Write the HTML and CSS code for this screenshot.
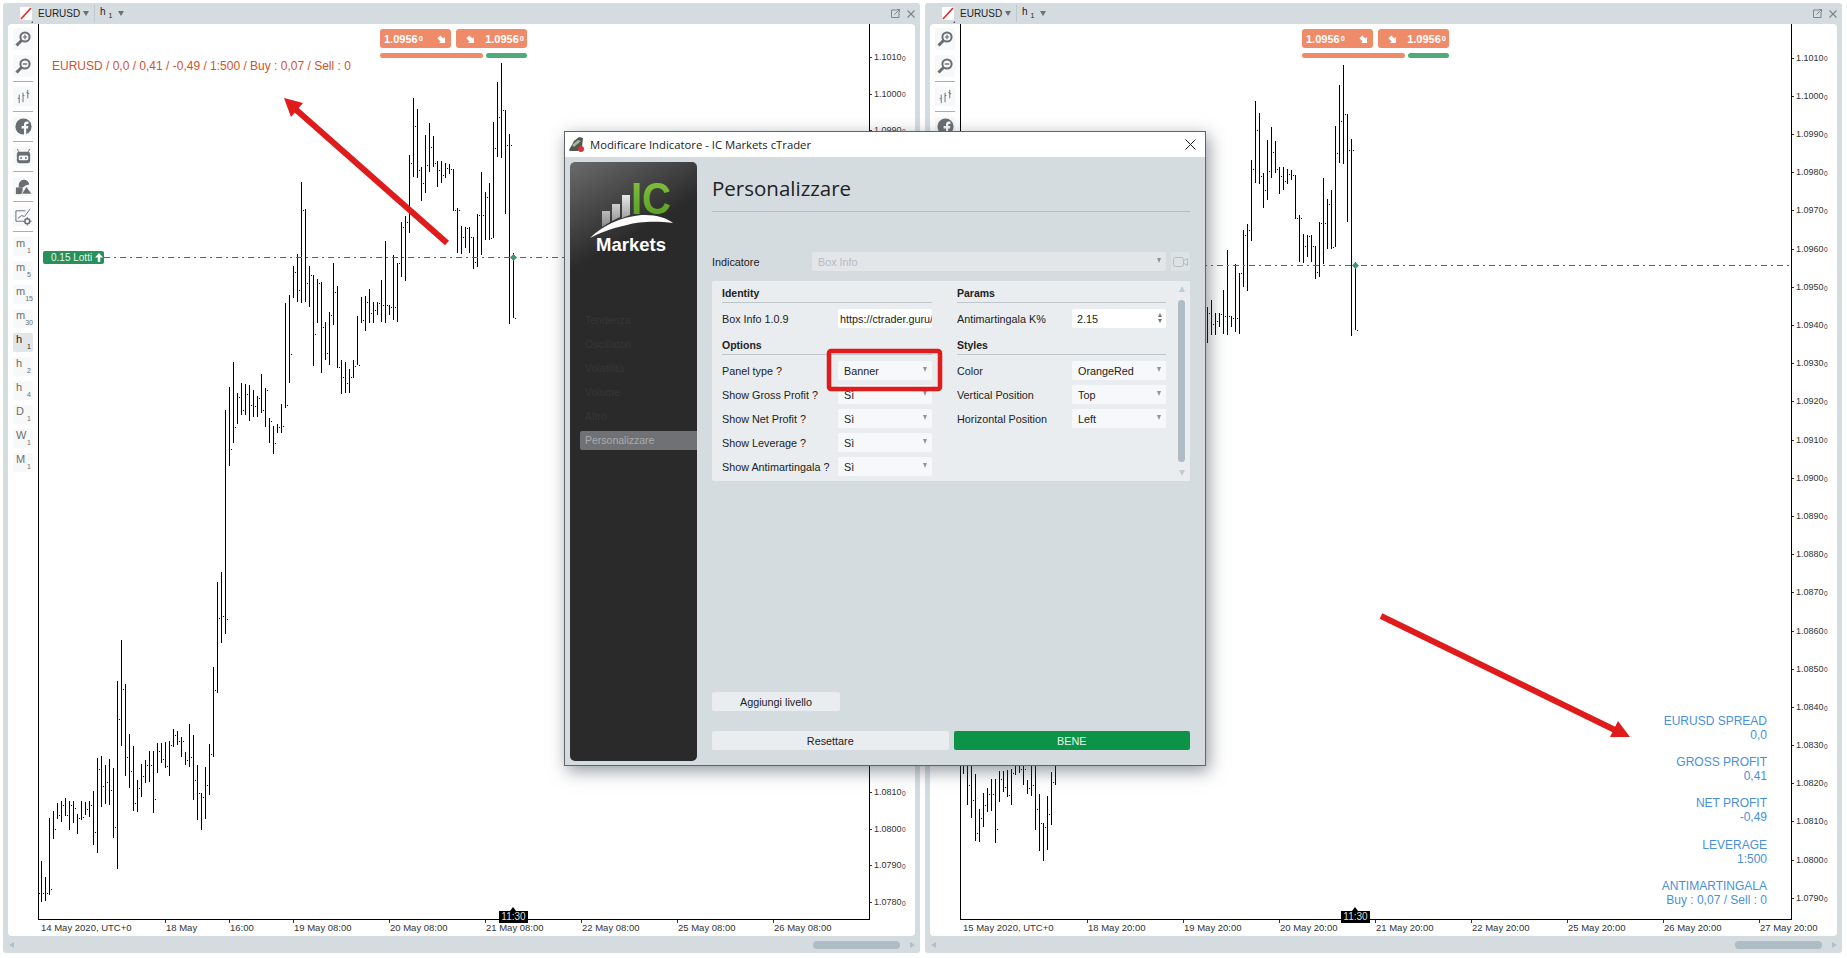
FILE: index.html
```html
<!DOCTYPE html>
<html lang="en">
    <head>
        <meta charset="UTF-8">
        <title>cTrader - Box Info</title>
        <link rel="stylesheet" href="styles.css">
        <script src="chart.js" defer></script>
    </head>
    <body>
        <!-- shared icons for both chart panels -->
        <svg class="sprite" width="0" height="0">
            <symbol id="i-zoom-in" viewBox="0 0 20 20"><circle cx="12" cy="8" r="4.600" fill="none" stroke="#6b6e71" stroke-width="2"/><path d="M8.500 11.500 3.500 16.500" stroke="#6b6e71" stroke-width="3"/><path d="M12 5.800v4.400M9.800 8h4.400" stroke="#6b6e71" stroke-width="1.200"/></symbol>
            <symbol id="i-zoom-out" viewBox="0 0 20 20"><circle cx="12" cy="8" r="4.600" fill="none" stroke="#6b6e71" stroke-width="2"/><path d="M8.500 11.500 3.500 16.500" stroke="#6b6e71" stroke-width="3"/><path d="M9.800 8h4.400" stroke="#6b6e71" stroke-width="1.400"/></symbol>
            <symbol id="i-bars" viewBox="0 0 20 20"><path d="M5.500 8v9M4 12h1.500M9.500 6v10M9.500 9h1.500M14.500 3v9M13 6h1.500M14.500 7h1.500" stroke="#6b6e71" fill="none"/></symbol>
            <symbol id="i-face" viewBox="0 0 20 20"><circle cx="10" cy="10" r="8.500" fill="#6b6e71"/><path d="M10.500 19v-7H8V9.500h2.500V8c0-2.300 1.200-3.200 3-3.200h1.700v2.500H14c-.8 0-1.100.4-1.100 1.100v1.100h2.200l-.4 2.500h-1.800v7z" fill="#f7f8f9"/></symbol>
            <symbol id="i-robot" viewBox="0 0 20 20"><path d="M5 5 3.500 2M15 5l1.500-3" stroke="#6b6e71"/><rect x="3" y="5" width="14" height="12" rx="2.500" fill="#6b6e71"/><rect x="5" y="9" width="10" height="5" rx="1.500" fill="#f7f8f9"/><circle cx="7.500" cy="11.500" r="1" fill="#6b6e71"/><circle cx="12.500" cy="11.500" r="1" fill="#6b6e71"/></symbol>
            <symbol id="i-shapes" viewBox="0 0 20 20"><path d="M5 9a5.500 5.500 0 0 1 11-1l-4 1-2.500 2H5z" fill="#6b6e71"/><path d="M2 11h7v7H2z" fill="#6b6e71"/><path d="M13 10l6 8H8z" fill="#6b6e71" stroke="#f7f8f9" stroke-width=".8"/></symbol>
            <symbol id="i-draw" viewBox="0 0 20 20"><path d="M12 4H2v11h8" fill="none" stroke="#6b6e71"/><path d="M4 12l4-3 3 1 6-8" fill="none" stroke="#6b6e71"/><circle cx="14" cy="15" r="2.600" fill="none" stroke="#6b6e71" stroke-width="1.600"/><path d="M14 10.500v2M14 17.500v2M9.500 15h2M16.500 15h2" stroke="#6b6e71"/></symbol>
            <symbol id="i-down" viewBox="0 0 10 10"><path d="M10 10V2.500L8 4.500 4 .5 .5 4l4 4-2 2z" fill="#fff"/></symbol>
        </svg>

        <main class="workspace">
            <section class="panel">
                <header class="panel-head">
                    <span class="grip"></span>
                    <svg class="sym-icon" width="14" height="16" viewBox="0 0 14 16"><rect width="12" height="13" rx="1" fill="#fff"/><path d="M1 12 11 1" stroke="#e33131" stroke-width="1.800"/><path d="M13 16v-2l-2 2z" fill="#555"/></svg>
                    <span class="sym-name">EURUSD</span><i class="caret"></i>
                    <span class="head-sep"></span>
                    <span class="period">h<sub>1</sub></span><i class="caret"></i>
                    <span class="win-btns"><svg width="9" height="9" viewBox="0 0 9 9"><path d="M6 1H.5v7.500H8V3M3.500 5.500 8.500.5M6 .5h2.500V3" fill="none" stroke="#7d868b"/></svg><svg width="8" height="8" viewBox="0 0 8 8"><path d="M.5.5l7 7M7.500.5l-7 7" stroke="#7d868b" stroke-width="1.200"/></svg></span>
                </header>
                <div class="panel-main">
                    <nav class="side">
                        <a class="tool tool-big"><svg width="20" height="20"><use href="#i-zoom-in"/></svg></a>
                        <a class="tool tool-big"><svg width="20" height="20"><use href="#i-zoom-out"/></svg></a>
                        <hr class="side-sep side-sep-first">
                        <a class="tool"><svg width="19" height="19"><use href="#i-bars"/></svg></a>
                        <hr class="side-sep">
                        <a class="tool"><svg width="19" height="19"><use href="#i-face"/></svg></a>
                        <hr class="side-sep">
                        <a class="tool"><svg width="19" height="19"><use href="#i-robot"/></svg></a>
                        <hr class="side-sep">
                        <a class="tool"><svg width="19" height="19"><use href="#i-shapes"/></svg></a>
                        <hr class="side-sep">
                        <a class="tool"><svg width="19" height="19"><use href="#i-draw"/></svg></a>
                        <hr class="side-sep">
                        <a class="tool tf"><b>m</b><sub>1</sub></a>
                        <a class="tool tf"><b>m</b><sub>5</sub></a>
                        <a class="tool tf"><b>m</b><sub>15</sub></a>
                        <a class="tool tf"><b>m</b><sub>30</sub></a>
                        <a class="tool tf active"><b>h</b><sub>1</sub></a>
                        <a class="tool tf"><b>h</b><sub>2</sub></a>
                        <a class="tool tf"><b>h</b><sub>4</sub></a>
                        <a class="tool tf"><b>D</b><sub>1</sub></a>
                        <a class="tool tf"><b>W</b><sub>1</sub></a>
                        <a class="tool tf"><b>M</b><sub>1</sub></a>
                    </nav>
                    <div class="chart">
                        <div class="plot">
                            <svg class="bars" id="bars-left" width="830" height="895" viewBox="39 24 830 895"></svg>
                            <div class="order-line order-left"></div>
                            <i class="order-mark mark-left"></i>
                            <span class="lot-tag">0.15 Lotti <svg width="8" height="9" viewBox="0 0 8 9"><path d="M4 0l4 4.500H5.200V9H2.800V4.500H0z" fill="#fff"/></svg></span>
                            <div class="quote">
                                <div class="quote-btns">
                                    <span class="quote-btn">1.0956<small>0</small><svg width="8" height="8"><use href="#i-down"/></svg></span>
                                    <span class="quote-btn"><svg class="flip" width="8" height="8"><use href="#i-down"/></svg>1.0956<small>0</small></span>
                                </div>
                                <div class="quote-split"><span class="split-sell"></span><span class="split-buy"></span></div>
                            </div>
                            <p class="banner">EURUSD / 0,0 / 0,41 / -0,49 / 1:500 / Buy : 0,07 / Sell : 0</p>
                            <span class="clock clock-left">11:30</span>
                        </div>
                        <div class="prices prices-left">
                            <span>1.1010<sub>0</sub></span><span>1.1000<sub>0</sub></span><span>1.0990<sub>0</sub></span><span>1.0980<sub>0</sub></span>
                            <span>1.0970<sub>0</sub></span><span>1.0960<sub>0</sub></span><span>1.0950<sub>0</sub></span><span>1.0940<sub>0</sub></span>
                            <span>1.0930<sub>0</sub></span><span>1.0920<sub>0</sub></span><span>1.0910<sub>0</sub></span><span>1.0900<sub>0</sub></span>
                            <span>1.0890<sub>0</sub></span><span>1.0880<sub>0</sub></span><span>1.0870<sub>0</sub></span><span>1.0860<sub>0</sub></span>
                            <span>1.0850<sub>0</sub></span><span>1.0840<sub>0</sub></span><span>1.0830<sub>0</sub></span><span>1.0820<sub>0</sub></span>
                            <span>1.0810<sub>0</sub></span><span>1.0800<sub>0</sub></span><span>1.0790<sub>0</sub></span><span>1.0780<sub>0</sub></span>
                        </div>
                        <div class="times">
                            <span class="time" style="left:2px">14 May 2020, UTC+0</span>
                            <span class="time tick" style="left:127px">18 May</span>
                            <span class="time tick" style="left:191px">16:00</span>
                            <span class="time tick" style="left:255px">19 May 08:00</span>
                            <span class="time tick" style="left:351px">20 May 08:00</span>
                            <span class="time tick" style="left:447px">21 May 08:00</span>
                            <span class="time tick" style="left:543px">22 May 08:00</span>
                            <span class="time tick" style="left:639px">25 May 08:00</span>
                            <span class="time tick" style="left:735px">26 May 08:00</span>
                        </div>
                    </div>
                </div>
                <footer class="panel-scroll">
                    <i class="arrow-left"></i><span class="thumb"></span><i class="arrow-right"></i>
                </footer>
            </section>

            <section class="panel">
                <header class="panel-head">
                    <span class="grip"></span>
                    <svg class="sym-icon" width="14" height="16" viewBox="0 0 14 16"><rect width="12" height="13" rx="1" fill="#fff"/><path d="M1 12 11 1" stroke="#e33131" stroke-width="1.800"/><path d="M13 16v-2l-2 2z" fill="#555"/></svg>
                    <span class="sym-name">EURUSD</span><i class="caret"></i>
                    <span class="head-sep"></span>
                    <span class="period">h<sub>1</sub></span><i class="caret"></i>
                    <span class="win-btns"><svg width="9" height="9" viewBox="0 0 9 9"><path d="M6 1H.5v7.500H8V3M3.500 5.500 8.500.5M6 .5h2.500V3" fill="none" stroke="#7d868b"/></svg><svg width="8" height="8" viewBox="0 0 8 8"><path d="M.5.5l7 7M7.500.5l-7 7" stroke="#7d868b" stroke-width="1.200"/></svg></span>
                </header>
                <div class="panel-main">
                    <nav class="side">
                        <a class="tool tool-big"><svg width="20" height="20"><use href="#i-zoom-in"/></svg></a>
                        <a class="tool tool-big"><svg width="20" height="20"><use href="#i-zoom-out"/></svg></a>
                        <hr class="side-sep side-sep-first">
                        <a class="tool"><svg width="19" height="19"><use href="#i-bars"/></svg></a>
                        <hr class="side-sep">
                        <a class="tool"><svg width="19" height="19"><use href="#i-face"/></svg></a>
                    </nav>
                    <div class="chart">
                        <div class="plot">
                            <svg class="bars" id="bars-right" width="830" height="895" viewBox="961 24 830 895"></svg>
                            <div class="order-line order-right"></div>
                            <i class="order-mark mark-right"></i>
                            <div class="quote">
                                <div class="quote-btns">
                                    <span class="quote-btn">1.0956<small>0</small><svg width="8" height="8"><use href="#i-down"/></svg></span>
                                    <span class="quote-btn"><svg class="flip" width="8" height="8"><use href="#i-down"/></svg>1.0956<small>0</small></span>
                                </div>
                                <div class="quote-split"><span class="split-sell"></span><span class="split-buy"></span></div>
                            </div>
                            <div class="stats">
                                <p>EURUSD SPREAD<br>0,0</p>
                                <p>GROSS PROFIT<br>0,41</p>
                                <p>NET PROFIT<br>-0,49</p>
                                <p>LEVERAGE<br>1:500</p>
                                <p>ANTIMARTINGALA<br>Buy : 0,07 / Sell : 0</p>
                            </div>
                            <span class="clock clock-right">11:30</span>
                        </div>
                        <div class="prices prices-right">
                            <span>1.1010<sub>0</sub></span><span>1.1000<sub>0</sub></span><span>1.0990<sub>0</sub></span><span>1.0980<sub>0</sub></span>
                            <span>1.0970<sub>0</sub></span><span>1.0960<sub>0</sub></span><span>1.0950<sub>0</sub></span><span>1.0940<sub>0</sub></span>
                            <span>1.0930<sub>0</sub></span><span>1.0920<sub>0</sub></span><span>1.0910<sub>0</sub></span><span>1.0900<sub>0</sub></span>
                            <span>1.0890<sub>0</sub></span><span>1.0880<sub>0</sub></span><span>1.0870<sub>0</sub></span><span>1.0860<sub>0</sub></span>
                            <span>1.0850<sub>0</sub></span><span>1.0840<sub>0</sub></span><span>1.0830<sub>0</sub></span><span>1.0820<sub>0</sub></span>
                            <span>1.0810<sub>0</sub></span><span>1.0800<sub>0</sub></span><span>1.0790<sub>0</sub></span>
                        </div>
                        <div class="times">
                            <span class="time" style="left:2px">15 May 2020, UTC+0</span>
                            <span class="time tick" style="left:127px">18 May 20:00</span>
                            <span class="time tick" style="left:223px">19 May 20:00</span>
                            <span class="time tick" style="left:319px">20 May 20:00</span>
                            <span class="time tick" style="left:415px">21 May 20:00</span>
                            <span class="time tick" style="left:511px">22 May 20:00</span>
                            <span class="time tick" style="left:607px">25 May 20:00</span>
                            <span class="time tick" style="left:703px">26 May 20:00</span>
                            <span class="time tick" style="left:799px">27 May 20:00</span>
                        </div>
                    </div>
                </div>
                <footer class="panel-scroll">
                    <i class="arrow-left"></i><span class="thumb"></span><i class="arrow-right"></i>
                </footer>
            </section>
        </main>

        <div class="dialog">
            <div class="dialog-title">
                <svg width="17" height="16" viewBox="0 0 17 16"><path d="M1 14 6 5l5-4 4 1-1 9-4 4H2z" fill="#4d5a4a"/><path d="M4 9l6-5 3 1-7 6z" fill="#a9b3a5"/><circle cx="13" cy="13" r="3" fill="#d8323c"/></svg>
                <span>Modificare Indicatore - IC Markets cTrader</span>
                <svg class="dialog-close" width="11" height="11" viewBox="0 0 11 11"><path d="M.5.5l10 10M10.500.5l-10 10" stroke="#222"/></svg>
            </div>
            <div class="dialog-body">
                <aside class="dialog-side">
                    <svg class="logo" width="127" height="100" viewBox="570 162 127 100">
                        <defs>
                            <linearGradient id="silver" x1="0" y1="0" x2="0" y2="1"><stop offset="0" stop-color="#e8e8e8"/><stop offset="1" stop-color="#8a8a8a"/></linearGradient>
                            <linearGradient id="green" x1="0" y1="0" x2="0" y2="1"><stop offset="0" stop-color="#8ac53e"/><stop offset="1" stop-color="#4f9a22"/></linearGradient>
                        </defs>
                        <path d="M602 211h8v11l-8 5zM612 204h8v13l-8 4zM622 195h8v20l-8 3z" fill="url(#silver)"/>
                        <text x="631" y="214" class="logo-ic" textLength="40" lengthAdjust="spacingAndGlyphs" fill="url(#green)">IC</text>
                        <path d="M590 238C604 224 627 215 645 215c12 0 22 3 28 8-14-2-34-2-46 2-14 3-28 8-37 13z" fill="#fff"/>
                        <text x="596" y="251" class="logo-name" textLength="70" lengthAdjust="spacingAndGlyphs">Markets</text>
                    </svg>
                    <ul class="side-menu">
                        <li>Tendenza</li>
                        <li>Oscillatori</li>
                        <li>Volatilità</li>
                        <li>Volume</li>
                        <li>Altro</li>
                        <li class="selected">Personalizzare</li>
                    </ul>
                </aside>
                <div class="dialog-main">
                    <h1 class="dialog-heading">Personalizzare</h1>
                    <div class="indicator-row">
                        <label>Indicatore</label>
                        <span class="select select-off">Box Info</span>
                        <span class="cam"><svg width="15" height="10" viewBox="0 0 15 10"><rect x=".5" y=".5" width="10" height="9" rx="2" fill="none" stroke="#b4bcc1"/><path d="M11 3.500 14.500 1.500v7L11 6.500" fill="none" stroke="#b4bcc1"/></svg></span>
                    </div>
                    <div class="params">
                        <div class="params-col">
                            <h2>Identity</h2>
                            <div class="row"><label>Box Info 1.0.9</label><span class="input">https://ctrader.guru/</span></div>
                            <h2 class="next">Options</h2>
                            <div class="row"><label>Panel type ?</label><span class="select">Banner</span></div>
                            <div class="row"><label>Show Gross Profit ?</label><span class="select">Sì</span></div>
                            <div class="row"><label>Show Net Profit ?</label><span class="select">Sì</span></div>
                            <div class="row"><label>Show Leverage ?</label><span class="select">Sì</span></div>
                            <div class="row"><label>Show Antimartingala ?</label><span class="select">Sì</span></div>
                        </div>
                        <div class="params-col">
                            <h2>Params</h2>
                            <div class="row"><label>Antimartingala K%</label><span class="input spin">2.15</span></div>
                            <h2 class="next">Styles</h2>
                            <div class="row"><label>Color</label><span class="select">OrangeRed</span></div>
                            <div class="row"><label>Vertical Position</label><span class="select">Top</span></div>
                            <div class="row"><label>Horizontal Position</label><span class="select">Left</span></div>
                        </div>
                        <div class="params-scroll"><i class="up"></i><span></span><i class="down"></i></div>
                    </div>
                    <button class="btn btn-level">Aggiungi livello</button>
                    <div class="dialog-actions">
                        <button class="btn">Resettare</button>
                        <button class="btn btn-ok">BENE</button>
                    </div>
                </div>
            </div>
        </div>

        <!-- hand drawn marks on top of the screenshot -->
        <svg class="marks" width="1847" height="958" viewBox="0 0 1847 958">
            <path d="M447 243 293 107" stroke="#df1b1b" stroke-width="6" fill="none"/>
            <path d="M284 98l19 5-12 14z" fill="#df1b1b"/>
            <path d="M1381 616 1617 731" stroke="#df1b1b" stroke-width="6" fill="none"/>
            <path d="M1630 737h-20l8-16z" fill="#df1b1b"/>
            <rect x="829" y="351" width="111" height="38" rx="2" fill="none" stroke="#df1b1b" stroke-width="4.500"/>
        </svg>
    </body>
</html>
```

FILE: styles.css
```css
* {
    box-sizing: border-box;
}
html, body {
    margin: 0;
    height: 958px;
    overflow: hidden;
    background-color: #fff;
    font-family: "Liberation Sans", Arial, sans-serif;
    color: #222;
}
.sprite {
    position: absolute;
}

/* chart panels */
.workspace {
    display: flex;
    gap: 5px;
    padding: 3px;
}
.panel {
    width: 917px;
    height: 950px;
    display: flex;
    flex-direction: column;
    background-color: #d5dce0;
    border-radius: 3px;
}
.panel-head {
    height: 21px;
    display: flex;
    align-items: center;
    padding-left: 5px;
    font-size: 10px;
}
.grip {
    width: 4px;
    height: 13px;
    margin-right: 8px;
    background-image: radial-gradient(#8c9499 40%, transparent 45%);
    background-size: 2px 2px;
}
.sym-icon {
    margin-right: 4px;
    margin-top: 2px;
}
.sym-name {
    width: 42px;
    margin-right: 3px;
    white-space: nowrap;
}
.caret {
    width: 0;
    height: 0;
    border-left: 3px solid transparent;
    border-right: 3px solid transparent;
    border-top: 5px solid #66707a;
}
.head-sep {
    width: 1px;
    height: 17px;
    margin: 0 5px;
    background-color: #c2c9cd;
}
.period {
    width: 16px;
    margin-right: 2px;
    position: relative;
    top: -1px;
}
.period sub {
    font-size: 7px;
    margin-left: 3px;
}
.win-btns {
    margin-left: auto;
    display: flex;
    align-items: center;
    gap: 7px;
    padding-right: 5px;
}
.panel-main {
    height: 912px;
    margin: 0 5px;
    display: flex;
    background-color: #fff;
    border-radius: 4px;
}
.panel-scroll {
    height: 17px;
    display: flex;
    align-items: center;
    padding: 0 5px;
}
.thumb {
    width: 87px;
    height: 8px;
    margin-left: auto;
    margin-right: 10px;
    border-radius: 4px;
    background-color: #aebcc5;
}
.arrow-left, .arrow-right {
    width: 0;
    height: 0;
    border-top: 3px solid transparent;
    border-bottom: 3px solid transparent;
}
.arrow-left {
    margin-left: 1px;
    border-right: 5px solid #b3bec5;
}
.arrow-right {
    border-left: 5px solid #b3bec5;
}

/* side toolbar */
.side {
    width: 30px;
    display: flex;
    flex-direction: column;
    gap: 5px;
    padding: 4px 5px 0;
}
.tool {
    width: 20px;
    height: 19px;
    flex: none;
    display: flex;
    align-items: center;
    justify-content: center;
    background-color: #f7f8f9;
    border-radius: 2px;
}
.tool-big {
    height: 22px;
}
.side-sep {
    width: 20px;
    height: 1px;
    flex: none;
    margin: 0;
    border: 0;
    background-color: #a8adb1;
}
.side-sep-first {
    margin-top: -1px;
}
.tf {
    justify-content: space-between;
    padding: 0 2px 0 3px;
    color: #6e6e6e;
    font-size: 11px;
}
.tf b {
    font-weight: normal;
    align-self: flex-start;
    line-height: 13px;
}
.tf sub {
    align-self: flex-end;
    font-size: 7px;
    line-height: 10px;
    vertical-align: baseline;
}
.tf.active {
    background-color: #e3e6e9;
    color: #222;
}

/* chart */
.chart {
    width: 877px;
    display: grid;
    grid-template-columns: 832px 45px;
    grid-template-rows: 896px 16px;
}
.plot {
    position: relative;
    border: 1px solid #000;
    border-top: 0;
}
.bars {
    position: absolute;
    top: 0;
    left: 0;
}
.order-line {
    position: absolute;
    height: 1px;
    right: 0;
    background-image: repeating-linear-gradient(90deg, #2f7d5c 0 6px, transparent 6px 10px, #2f7d5c 10px 12px, transparent 12px 16px);
}
.order-left {
    top: 233px;
    left: 65px;
}
.order-right {
    top: 241px;
    left: 0;
}
.order-mark {
    position: absolute;
    width: 5px;
    height: 5px;
    background-color: #3d9a70;
    transform: rotate(45deg);
}
.mark-left {
    top: 231px;
    left: 472px;
}
.mark-right {
    top: 239px;
    left: 392px;
}
.lot-tag {
    position: absolute;
    top: 227px;
    left: 4px;
    width: 61px;
    height: 13px;
    padding-left: 8px;
    display: flex;
    align-items: center;
    gap: 3px;
    border-radius: 2px;
    background-color: #26915a;
    color: #e8f4ec;
    font-size: 10px;
    white-space: nowrap;
}
.quote {
    position: absolute;
    top: 5px;
    left: 341px;
    width: 147px;
}
.quote-btns {
    display: flex;
    justify-content: space-between;
}
.quote-btn {
    width: 71px;
    height: 19px;
    display: flex;
    align-items: center;
    padding: 0 6px 0 4px;
    border-radius: 3px;
    background-color: #f08b69;
    color: #fff;
    font-size: 11px;
    font-weight: bold;
    white-space: nowrap;
}
.quote-btn small {
    font-size: 7.500px;
    margin-left: 1px;
    margin-right: auto;
}
.quote-btn .flip {
    margin-left: 6px;
    margin-right: auto;
}
.quote-btn .flip ~ small {
    margin-right: -3px;
}
.quote-split {
    display: flex;
    gap: 3px;
    margin-top: 5px;
}
.split-sell, .split-buy {
    height: 5px;
    border-radius: 3px;
}
.split-sell {
    flex: 1;
    background-color: #f08b69;
}
.split-buy {
    width: 41px;
    background-color: #4dac79;
}
.banner {
    position: absolute;
    top: 35px;
    left: 13px;
    margin: 0;
    color: #d0532b;
    font-size: 12px;
    line-height: 14px;
    white-space: nowrap;
}
.stats {
    position: absolute;
    right: 24px;
    bottom: 12px;
    display: flex;
    flex-direction: column;
    gap: 13.300px;
    color: #4a90d9;
    font-size: 12px;
    line-height: 14px;
    text-align: right;
}
.stats p {
    margin: 0;
}
.clock {
    position: absolute;
    bottom: -4px;
    width: 29px;
    height: 12px;
    background-color: #000;
    color: #ddd;
    font-size: 10px;
    line-height: 12px;
    text-align: center;
    z-index: 1;
}
.clock::before {
    content: "";
    position: absolute;
    top: -4px;
    left: 11px;
    border-left: 3px solid transparent;
    border-right: 3px solid transparent;
    border-bottom: 4px solid #000;
}
.clock-left {
    left: 460px;
}
.clock-right {
    left: 380px;
}
.prices {
    display: flex;
    flex-direction: column;
    font-size: 9px;
    color: #333;
    white-space: nowrap;
}
.prices span {
    flex: none;
    position: relative;
    display: flex;
    align-items: center;
    padding-left: 4px;
}
.prices span::before {
    content: "";
    position: absolute;
    left: 0;
    top: 50%;
    width: 2px;
    height: 1px;
    background-color: #333;
}
.prices sub {
    font-size: 6.500px;
    line-height: 1;
    margin: 4px 0 0 .5px;
    vertical-align: baseline;
}
.prices-left {
    padding-top: 14.400px;
}
.prices-left span {
    height: 36.750px;
}
.prices-right {
    padding-top: 14.600px;
}
.prices-right span {
    height: 38.200px;
}
.times {
    position: relative;
    grid-column: 1 / 3;
    font-size: 9.500px;
    color: #333;
}
.time {
    position: absolute;
    top: 2px;
    white-space: nowrap;
    line-height: 12px;
    padding-left: 1px;
}
.tick::before {
    content: "";
    position: absolute;
    left: 0;
    top: -2px;
    width: 1px;
    height: 3px;
    background-color: #333;
}

/* indicator dialog */
.dialog {
    position: absolute;
    top: 131px;
    left: 564px;
    width: 642px;
    height: 635px;
    display: flex;
    flex-direction: column;
    border: 1px solid #5f6468;
    background-color: #d5dce0;
    box-shadow: 3px 5px 16px rgba(60, 70, 80, .55);
}
.dialog-title {
    height: 25px;
    flex: none;
    display: flex;
    align-items: center;
    gap: 5px;
    padding: 0 0 1px 3px;
    background-color: #fff;
    font-family: "Open Sans", "Liberation Sans", sans-serif;
    font-size: 11.300px;
}
.dialog-close {
    margin-left: auto;
    margin-right: 9px;
}
.dialog-body {
    flex: 1;
    display: flex;
    gap: 15px;
    padding: 5px 15px 4px 5px;
}
.dialog-side {
    width: 127px;
    border-radius: 5px;
    background-color: #2a2a2a;
    background-image: linear-gradient(150deg, #6b6b6b 0, #2a2a2a 95px);
}
.logo {
    display: block;
}
.logo-ic {
    font-size: 45px;
    font-weight: bold;
}
.logo-name {
    font-size: 19px;
    font-weight: bold;
    fill: #fff;
}
.side-menu {
    list-style: none;
    margin: 49px 0 0;
    padding: 0;
    font-size: 10.500px;
    color: #363636;
}
.side-menu li {
    height: 24px;
    line-height: 19px;
    padding-left: 15px;
}
.side-menu .selected {
    height: 19px;
    margin-left: 10px;
    padding-left: 5px;
    background-color: #6f7174;
    color: #a9abad;
    border-radius: 2px 0 0 2px;
}
.dialog-main {
    flex: 1;
    display: flex;
    flex-direction: column;
    font-size: 10.800px;
}
.dialog-heading {
    height: 50px;
    margin: 0;
    padding-top: 13px;
    border-bottom: 1px solid #b5bdc2;
    font-family: "Open Sans", "Liberation Sans", sans-serif;
    font-size: 20.500px;
    font-weight: normal;
    line-height: 26px;
}
.indicator-row {
    display: flex;
    align-items: center;
    height: 19px;
    margin-top: 40px;
}
.indicator-row label {
    width: 100px;
}
.select, .input {
    height: 19px;
    display: block;
    position: relative;
    padding-left: 6px;
    line-height: 20px;
    border-radius: 2px;
    background-color: #f2f4f5;
    white-space: nowrap;
    overflow: hidden;
}
.select::after {
    content: "";
    position: absolute;
    right: 5px;
    top: 6px;
    border-left: 2.500px solid transparent;
    border-right: 2.500px solid transparent;
    border-top: 5px solid #8b959b;
}
.select-off {
    flex: 1;
    background-color: #e2e6e9;
    color: #b4bcc1;
}
.cam {
    width: 19px;
    height: 19px;
    margin-left: 5px;
    display: flex;
    align-items: center;
    justify-content: center;
    border-radius: 2px;
    background-color: #dde2e5;
}
.params {
    height: 200px;
    margin-top: 10px;
    padding: 5px 0 0 10px;
    display: flex;
    gap: 25px;
    position: relative;
    background-color: #e9edf0;
    border-radius: 2px;
}
.params-col {
    width: 210px;
}
.params-col + .params-col {
    width: 209px;
}
.params h2 {
    height: 17px;
    margin: 0 0 6px;
    border-bottom: 1px solid #c0c7cc;
    font-size: 10.500px;
    line-height: 14px;
}
.params h2.next {
    margin-top: 10px;
}
.row {
    display: flex;
    align-items: center;
    justify-content: space-between;
    height: 19px;
    margin-bottom: 5px;
}
.row .select, .row .input {
    width: 94px;
    background-color: #fff;
}
.row .select {
    background-color: #f6f8f9;
}
.row .input {
    padding-left: 2px;
}
.row .spin {
    padding-left: 5px;
}
.spin::before, .spin::after {
    content: "";
    position: absolute;
    right: 4px;
    border-left: 2.500px solid transparent;
    border-right: 2.500px solid transparent;
}
.spin::before {
    top: 4px;
    border-bottom: 4px solid #777;
}
.spin::after {
    top: 10px;
    border-top: 4px solid #777;
}
.params-scroll {
    position: absolute;
    top: 5px;
    right: 5px;
    bottom: 5px;
    width: 7px;
    display: flex;
    flex-direction: column;
    align-items: center;
    justify-content: space-between;
}
.params-scroll span {
    width: 7px;
    height: 162px;
    border-radius: 4px;
    background-color: #aebcc5;
}
.params-scroll .up, .params-scroll .down {
    border-left: 3.500px solid transparent;
    border-right: 3.500px solid transparent;
}
.params-scroll .up {
    border-bottom: 6px solid #c0cbd2;
}
.params-scroll .down {
    border-top: 6px solid #c0cbd2;
}
.btn {
    height: 19px;
    padding: 0;
    border: 0;
    border-radius: 2px;
    background-color: #e9edf0;
    color: #222;
    font: inherit;
}
.btn-level {
    width: 128px;
    margin-top: auto;
}
.dialog-actions {
    display: flex;
    gap: 5px;
    margin-top: 20px;
    margin-bottom: 11px;
}
.dialog-actions .btn {
    flex: 1;
}
.btn-ok {
    background-color: #0b9447;
    color: #e6f7ec;
}

.marks {
    position: absolute;
    top: 0;
    left: 0;
    pointer-events: none;
}
```

FILE: chart.js
```js
// bars of the left chart, [high, low, close] as y pixels on the page
const bars = [
    [861,902,893],[877,901,893],[818,895,889],[811,839,829],[803,819,815],[801,822,805],[798,816,815],[801,830,805],
    [801,823,808],[814,834,818],[801,820,817],[802,815,809],[801,817,805],[791,845,832],[758,853,769],[756,807,786],
    [765,804,782],[759,805,790],[768,838,827],[681,869,719],[640,746,689],[684,776,757],[734,788,771],[746,811,803],
    [780,812,788],[764,797,776],[760,783,765],[751,782,765],[751,813,799],[743,773,751],[743,763,759],[742,768,766],
    [741,776,745],[729,747,735],[731,745,741],[737,757,741],[752,765,760],[724,767,757],[735,800,780],[765,820,793],
    [793,830,797],[767,819,785],[744,795,754],[667,757,690],[582,693,618],[572,643,616],[410,634,619],[387,466,449],
    [362,443,427],[393,424,397],[383,415,410],[384,415,394],[385,421,405],[390,417,406],[396,417,398],[374,413,410],
    [388,427,390],[418,443,421],[426,454,443],[424,433,427],[404,433,426],[303,408,405],[295,383,354],[266,298,272],
    [254,302,290],[182,303,210],[209,302,283],[266,307,275],[275,366,334],[279,323,283],[282,373,327],[322,360,353],
    [312,365,315],[263,325,292],[286,368,367],[360,394,377],[362,393,383],[369,393,377],[360,378,366],[316,365,365],
    [297,323,320],[296,331,302],[289,323,313],[302,323,310],[302,315,303],[280,322,305],[241,323,305],[305,315,307],
    [255,320,307],[263,322,263],[222,277,227],[216,281,222],[155,233,163],[98,177,126],[109,178,170],[167,201,183],
    [135,193,165],[123,172,147],[136,167,163],[161,187,170],[161,183,175],[163,178,168],[164,174,169],[169,211,210],
    [208,253,210],[226,254,237],[227,248,228],[227,253,237],[237,269,262],[214,267,215],[172,255,215],[192,240,197],
    [183,240,238],[122,238,148],[82,157,117],[63,158,110],[110,214,145],[134,324,145],[253,318,318]
];

function drawBars(id, firstBar, firstX, mapY) {
    let d = "";
    for (let i = firstBar; i < bars.length; i++) {
        const x = firstX + (i - firstBar) * 4 + 0.5;
        const high = Math.round(mapY(bars[i][0]));
        const low = Math.round(mapY(bars[i][1]));
        const close = Math.round(mapY(bars[i][2])) + 0.5;
        const open = i > 0 ? Math.round(mapY(bars[i - 1][2])) + 0.5 : close;
        d += "M" + x + " " + high + "V" + low;
        d += "M" + (x - 2.5) + " " + open + "h1";
        d += "M" + (x + 1.5) + " " + close + "h1";
    }
    const svg = document.getElementById(id);
    const path = document.createElementNS("http://www.w3.org/2000/svg", "path");
    path.setAttribute("d", d);
    path.setAttribute("stroke", "#000");
    path.setAttribute("fill", "none");
    svg.appendChild(path);
}

drawBars("bars-left", 0, 41, (y) => y);
// the right chart starts 20 bars later and has a slightly taller scale
drawBars("bars-right", 20, 963, (y) => 57.7 + (y - 56) * 1.038);
```
